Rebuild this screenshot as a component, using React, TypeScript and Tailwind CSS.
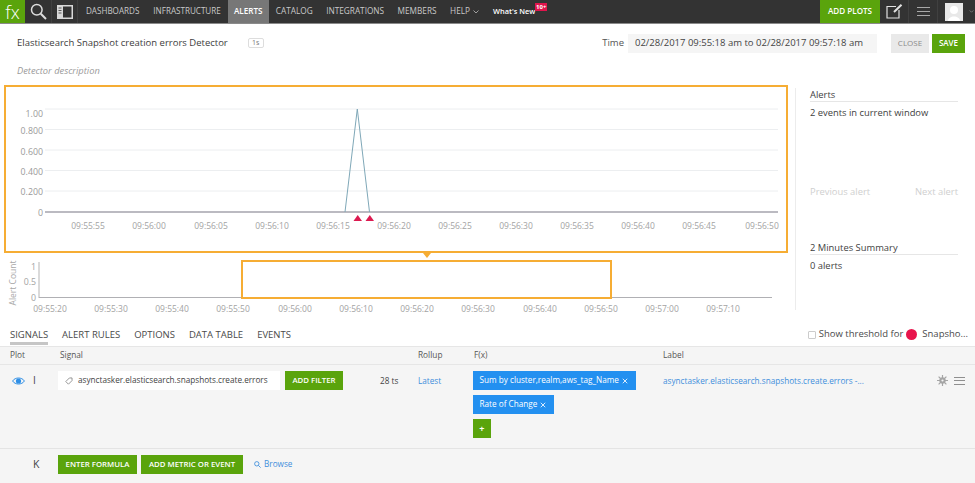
import React from "react";

const yTicks = [
  { y: 109, c: 113.5, l: "1.00" },
  { y: 129.5, c: 131, l: "0.800" },
  { y: 150, c: 151.5, l: "0.600" },
  { y: 170.5, c: 171.5, l: "0.400" },
  { y: 191, c: 192, l: "0.200" },
];
const mainX = [
  [88, "09:55:55"], [149, "09:56:00"], [211, "09:56:05"], [272, "09:56:10"], [333, "09:56:15"], [394, "09:56:20"],
  [455, "09:56:25"], [516, "09:56:30"], [577, "09:56:35"], [638, "09:56:40"], [699, "09:56:45"], [762, "09:56:50"],
] as const;
const miniX = [
  [50, "09:55:20"], [111, "09:55:30"], [172, "09:55:40"], [233, "09:55:50"], [295, "09:56:00"], [356, "09:56:10"],
  [417, "09:56:20"], [478, "09:56:30"], [540, "09:56:40"], [601, "09:56:50"], [662, "09:57:00"], [723, "09:57:10"],
] as const;

function MainChart() {
  return (
    <svg width="780" height="164" viewBox="6 87 780 164" className="block">
      {yTicks.map((t) => (
        <g key={t.l}>
          <line x1="45" x2="778" y1={t.y} y2={t.y} stroke="#eceef0" strokeWidth="1" />
          <text x="43" y={t.c + 3} textAnchor="end" fontSize="8.8" fill="#9a9a9a">{t.l}</text>
        </g>
      ))}
      <text x="43" y="215.5" textAnchor="end" fontSize="8.8" fill="#9a9a9a">0</text>
      <line x1="45" x2="778" y1="212" y2="212" stroke="#a5a3ad" strokeWidth="1.3" />
      <polyline points="345,212 357.3,109 369.5,212" fill="none" stroke="#7fa8b8" strokeWidth="1" />
      <path d="M353.5 221 L357.7 215 L362 221 Z" fill="#dc1a50" />
      <path d="M365.5 221 L369.8 215 L374 221 Z" fill="#dc1a50" />
      {mainX.map(([x, l]) => (
        <text key={l} x={x} y="229" textAnchor="middle" fontSize="8.5" fill="#a3a3a3">{l}</text>
      ))}
    </svg>
  );
}

function MiniChart() {
  return (
    <svg width="790" height="60" viewBox="0 256 790 60" className="block">
      <text transform="translate(16 283) rotate(-90)" textAnchor="middle" fontSize="8.5" fill="#a8a8a8">Alert Count</text>
      <text x="36" y="270" textAnchor="end" fontSize="8.8" fill="#a3a3a3">1</text>
      <text x="36" y="285" textAnchor="end" fontSize="8.8" fill="#a3a3a3">0.5</text>
      <text x="36" y="301" textAnchor="end" fontSize="8.8" fill="#a3a3a3">0</text>
      <line x1="39" x2="39" y1="262" y2="298" stroke="#b5b5b5" />
      <line x1="39" x2="772" y1="297.5" y2="297.5" stroke="#b0b0b4" />
      {miniX.map(([x, l]) => (
        <text key={l} x={x} y="312" textAnchor="middle" fontSize="8.5" fill="#a3a3a3">{l}</text>
      ))}
    </svg>
  );
}

function Tag() {
  return (
    <svg width="8" height="8" viewBox="0 0 10 10" fill="none" stroke="#8a8a8a" strokeWidth="1.1" className="shrink-0">
      <path d="M5.5 1.2 H8.8 V4.5 L4.3 9 L1 5.7 Z" />
    </svg>
  );
}

function Cross() {
  return (
    <svg width="6" height="6" viewBox="0 0 8 8" stroke="white" strokeWidth="1.1" className="shrink-0"><path d="M1 1 L7 7 M7 1 L1 7" /></svg>
  );
}

function Burger({ color, w, gap }: { color: string; w: string; gap: string }) {
  return (
    <div className={`flex flex-col ${gap} ${w}`}>
      <div className="h-px" style={{ background: color }} />
      <div className="h-px" style={{ background: color }} />
      <div className="h-px" style={{ background: color }} />
    </div>
  );
}

const navItems = ["DASHBOARDS", "INFRASTRUCTURE"];
const navItems2 = ["CATALOG", "INTEGRATIONS", "MEMBERS"];

export default function App() {
  return (
    <div className="w-[975px] h-[483px] overflow-hidden bg-white text-[#444] font-['Open_Sans','Liberation_Sans',sans-serif]">
      {/* top bar */}
      <div className="h-[24px] bg-[#333333] border-b border-[#8a8a8a] flex items-stretch text-[8.1px] text-[#c9c9c9]">
        <div className="w-[25px] bg-[#5aa40c] flex items-center justify-center text-white text-[18px] font-light leading-none">fx</div>
        <div className="w-[27px] flex items-center justify-center border-r border-[#404040]">
          <svg width="17" height="17" viewBox="0 0 17 17" fill="none" stroke="#dcdcdc" strokeWidth="1.5">
            <circle cx="6.8" cy="6.8" r="5.3" /><path d="M10.8 10.8 L16 16" strokeWidth="2" />
          </svg>
        </div>
        <div className="w-[26px] flex items-center justify-center border-r border-[#404040]">
          <svg width="16" height="14" viewBox="0 0 16 14">
            <rect x="0" y="0" width="16" height="14" fill="#d8d8d8" />
            <rect x="6" y="1.5" width="8.5" height="11" fill="#333" />
            <rect x="1.5" y="2.5" width="3" height="1" fill="#555" />
            <rect x="1.5" y="5" width="3" height="1" fill="#555" />
            <rect x="1.5" y="7.5" width="3" height="1" fill="#555" />
          </svg>
        </div>
        <div className="flex items-center gap-[14px] pl-[8px]">
          {navItems.map((n) => <span key={n}>{n}</span>)}
        </div>
        <div className="ml-[7px] w-[41px] bg-[#777777] text-white font-semibold flex items-center justify-center">ALERTS</div>
        <div className="flex items-center gap-[13.5px] pl-[7px] text-[8.25px]">
          {navItems2.map((n) => <span key={n}>{n}</span>)}
          <span className="flex items-center gap-[3px]">HELP
            <svg width="6" height="4" viewBox="0 0 6 4" fill="none" stroke="#bdbdbd" strokeWidth="0.8"><path d="M0.5 0.5 L3 3 L5.5 0.5" /></svg>
          </span>
        </div>
        <div className="ml-[14px] flex items-center text-white font-semibold text-[7.4px] relative w-[56px]">
          What's New
          <span className="absolute left-[42px] top-[3px] bg-[#e0144c] text-white text-[6px] leading-[8px] px-[1px] font-bold">10+</span>
        </div>
        <div className="ml-auto w-[60px] bg-[#5aa40c] text-white font-semibold flex items-center justify-center">ADD PLOTS</div>
        <div className="w-[29px] pl-[1px] flex items-center justify-center border-r border-[#404040]">
          <svg width="17" height="15" viewBox="0 0 17 15" fill="none" stroke="#e2e2e2" strokeWidth="1.2">
            <path d="M10 2.5 H1 V14 H13 V6" /><path d="M8 8 L15.5 0.8" strokeWidth="2" />
          </svg>
        </div>
        <div className="w-[29px] flex items-center justify-center border-r border-[#404040]">
          <Burger color="#a8a8a8" w="w-[13px]" gap="gap-[3px]" />
        </div>
        <div className="flex items-center w-[37px] pl-[7px] gap-[6px]">
          <div className="w-[18px] h-[18px] bg-[#e8e8e8] flex items-end justify-center overflow-hidden shrink-0">
            <svg width="18" height="18" viewBox="0 0 18 18"><circle cx="9" cy="7" r="4" fill="white" /><path d="M3 18 C3 12 15 12 15 18 Z" fill="white" /></svg>
          </div>
          <svg width="5" height="3" viewBox="0 0 6 4" fill="none" stroke="#9a9a9a" strokeWidth="0.8" className="shrink-0"><path d="M0.5 0.5 L3 3 L5.5 0.5" /></svg>
        </div>
      </div>

      {/* title */}
      <div className="h-[37px] flex items-center pl-[17px] pr-[10px] pt-[1px]">
        <span className="text-[9.5px] text-[#3d3d3d]">Elasticsearch Snapshot creation errors Detector</span>
        <span className="ml-[20px] h-[10px] w-[16px] border border-[#ddd] rounded-[2px] text-[7px] leading-[8px] text-center text-[#777]">1s</span>
        <span className="ml-auto text-[9.5px] text-[#555]">Time</span>
        <span className="ml-[4px] w-[249px] h-[19px] bg-[#f5f5f5] text-[9.5px] text-[#444] flex items-center pl-[7px]">02/28/2017 09:55:18 am to 02/28/2017 09:57:18 am</span>
        <span className="ml-[14px] w-[38px] h-[19px] bg-[#e9e9e9] text-[#8a8a8a] text-[8px] flex items-center justify-center">CLOSE</span>
        <span className="ml-[3px] w-[33px] h-[19px] bg-[#5aa40c] text-white text-[8px] font-semibold flex items-center justify-center">SAVE</span>
      </div>
      <div className="h-[24px] pl-[17px] text-[9.3px] italic text-[#9a9a9a] leading-[20px]">Detector description</div>

      {/* chart area */}
      <div className="h-[240px] flex">
        <div className="w-[795px] shrink-0 pl-[4px]">
          <div className="w-[784px] h-[168px] border-2 border-[#f6ad34] relative">
            <MainChart />
            <div className="absolute left-[417px] top-[166px] w-0 h-0 border-l-[4px] border-r-[4px] border-t-[5px] border-l-transparent border-r-transparent border-t-[#f6ad34]" />
          </div>
          <div className="relative -ml-[4px] mt-[3px]">
            <MiniChart />
            <div className="absolute left-[241px] top-[4px] w-[371px] h-[39px] border-2 border-[#f6ad34]" />
          </div>
        </div>
        <div className="border-l border-[#ececec] h-[222px] mt-[3px] pl-[14px] w-[163px] text-[#3f3f3f] flex flex-col text-[9.4px]">
          <div className="h-[13px] mt-[1px] leading-[12px] border-b border-[#e6e6e6]">Alerts</div>
          <div className="leading-[12px] mt-[5px]">2 events in current window</div>
          <div className="flex justify-between text-[#cfcfcf] leading-[12px] mt-[67px]">
            <span>Previous alert</span><span>Next alert</span>
          </div>
          <div className="h-[13px] leading-[12px] mt-[44px] border-b border-[#e6e6e6]">2 Minutes Summary</div>
          <div className="leading-[12px] mt-[5px]">0 alerts</div>
        </div>
      </div>

      {/* tabs */}
      <div className="h-[21px] flex items-start pl-[10px] pr-[7px] text-[9.5px] text-[#4a4a4a]">
        <div className="h-[20px] flex gap-[14px]">
          <span className="h-[20px] leading-[19px] border-b-[3px] border-[#c6c6c6]">SIGNALS</span>
          <span className="leading-[19px]">ALERT RULES</span>
          <span className="leading-[19px]">OPTIONS</span>
          <span className="leading-[19px]">DATA TABLE</span>
          <span className="leading-[19px]">EVENTS</span>
        </div>
        <div className="ml-auto flex items-center h-[19px]">
          <span className="w-[8px] h-[8px] border border-[#ccc] rounded-[1px] mr-[3px]" />
          <span>Show threshold for</span>
          <span className="w-[11px] h-[11px] rounded-full bg-[#e8154c] ml-[3px] mr-[5px]" />
          <span>Snapsho...</span>
        </div>
      </div>

      {/* table */}
      <div className="bg-[#f5f5f5] h-[138px]">
        <div className="h-[19px] border-y border-[#e6e6e6] flex items-center pb-[1px] text-[8.3px] text-[#555]">
          <span className="pl-[10px] w-[60px]">Plot</span>
          <span className="w-[358px]">Signal</span>
          <span className="w-[56px]">Rollup</span>
          <span className="w-[189px]">F(x)</span>
          <span>Label</span>
        </div>
        <div className="h-[84px] border-b border-[#e4e4e4] flex items-start pt-[6px] text-[8.2px]">
          <div className="w-[33px] h-[19px] pl-[12px] flex items-center">
            <svg width="13" height="10" viewBox="0 0 13 10">
              <path d="M0.6 5 C3 1 10 1 12.4 5 C10 9 3 9 0.6 5 Z" fill="none" stroke="#2f8fe6" strokeWidth="1" />
              <circle cx="6.5" cy="5" r="2.6" fill="#2f8fe6" />
            </svg>
          </div>
          <div className="w-[25px] h-[19px] text-[10px] leading-[19px] text-[#444]">I</div>
          <div className="w-[222px] h-[19px] bg-white flex items-center pl-[7px] gap-[5px] text-[#444] whitespace-nowrap">
            <Tag /><span>asynctasker.elasticsearch.snapshots.create.errors</span>
          </div>
          <div className="ml-[5px] w-[58px] h-[19px] bg-[#5aa40c] text-white text-[7.8px] font-semibold flex items-center justify-center">ADD FILTER</div>
          <div className="ml-[37px] w-[38px] h-[19px] leading-[19px] text-[#444]">28 ts</div>
          <div className="w-[54.5px] h-[19px] leading-[19px] text-[#3f8fdc]">Latest</div>
          <div className="w-[190.5px] flex flex-col items-start gap-[5px] text-white">
            <div className="h-[19px] w-[163.5px] bg-[#2390f0] flex items-center pl-[7px] gap-[3px] whitespace-nowrap"><span>Sum by cluster,realm,aws_tag_Name</span><Cross /></div>
            <div className="h-[19px] w-[81.5px] bg-[#2390f0] flex items-center pl-[7px] gap-[3px] whitespace-nowrap"><span>Rate of Change</span><Cross /></div>
            <div className="h-[19px] w-[18.5px] bg-[#5aa40c] flex items-center justify-center text-[9px] font-bold">+</div>
          </div>
          <div className="w-[274px] h-[19px] leading-[19px] text-[#3f8fdc]">asynctasker.elasticsearch.snapshots.create.errors -...</div>
          <div className="h-[19px] flex items-center w-[13px]">
            <svg width="11" height="11" viewBox="0 0 11 11">
              <circle cx="5.5" cy="5.5" r="3.2" fill="#a5a5a5" />
              <path d="M5.5 0 V11 M0 5.5 H11 M1.6 1.6 L9.4 9.4 M9.4 1.6 L1.6 9.4" stroke="#a5a5a5" strokeWidth="1.2" />
              <circle cx="5.5" cy="5.5" r="1.1" fill="#f5f5f5" />
            </svg>
          </div>
          <div className="h-[19px] flex items-center ml-[4px]">
            <Burger color="#8f8f8f" w="w-[11px]" gap="gap-[2.5px]" />
          </div>
        </div>
        <div className="flex items-center pt-[6px]">
          <div className="w-[58px] pl-[33px] text-[10.5px] text-[#444]">K</div>
          <div className="w-[79px] h-[19px] bg-[#5aa40c] text-white text-[7.8px] font-semibold flex items-center justify-center">ENTER FORMULA</div>
          <div className="ml-[4px] w-[102px] h-[19px] bg-[#5aa40c] text-white text-[7.8px] font-semibold flex items-center justify-center">ADD METRIC OR EVENT</div>
          <div className="ml-[11px] flex items-center gap-[3px] text-[8.2px] text-[#3f8fdc]">
            <svg width="7" height="7" viewBox="0 0 8 8" fill="none" stroke="#3f8fdc" strokeWidth="1"><circle cx="3.2" cy="3.2" r="2.5" /><path d="M5 5 L7.6 7.6" /></svg>
            Browse
          </div>
        </div>
      </div>
    </div>
  );
}
